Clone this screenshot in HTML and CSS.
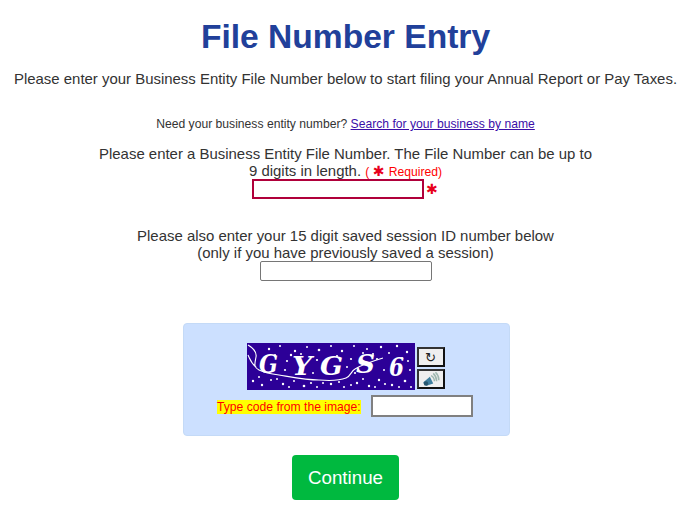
FILE: index.html
```html
<!DOCTYPE html>
<html lang="en">
<head>
    <meta charset="UTF-8">
    <meta name="viewport" content="width=device-width, initial-scale=1.0">
    <title>File Number Entry</title>
    <link rel="stylesheet" href="styles.css">
</head>
<body>
    <div class="page">
        <h1>File Number Entry</h1>
        <p class="intro">Please enter your Business Entity File Number below to start filing your Annual Report or Pay Taxes.</p>
        <p class="lookup">Need your business entity number? <a href="#">Search for your business by name</a></p>

        <div class="field file-field">
            <label for="fileNumber">Please enter a Business Entity File Number. The File Number can be up to<br>9 digits in length. <span class="required">( <span class="star inline-star">✱</span> Required)</span></label>
            <div class="input-row">
                <input type="text" id="fileNumber" class="text-input invalid">
                <span class="star side-star">✱</span>
            </div>
        </div>

        <div class="field session-field">
            <label for="sessionId">Please also enter your 15 digit saved session ID number below<br>(only if you have previously saved a session)</label>
            <div class="input-row">
                <input type="text" id="sessionId" class="text-input">
            </div>
        </div>

        <div class="captcha">
            <div class="captcha-top">
                <svg class="captcha-img" width="168" height="47" viewBox="0 0 168 47">
                    <rect width="168" height="47" fill="#2c0097"/>
                    <g fill="#fff">
                        <circle cx="22" cy="6" r="1.2"/><circle cx="33" cy="3" r="1"/><circle cx="48" cy="8" r="1.2"/>
                        <circle cx="60" cy="4" r="1"/><circle cx="72" cy="7" r="1.3"/><circle cx="84" cy="3" r="1"/>
                        <circle cx="95" cy="8" r="1.2"/><circle cx="107" cy="3" r="1"/><circle cx="120" cy="6" r="1"/>
                        <circle cx="134" cy="4" r="1.2"/><circle cx="150" cy="3" r="1.2"/><circle cx="160" cy="9" r="1.2"/>
                        <circle cx="6" cy="38" r="1.2"/><circle cx="15" cy="42" r="1.2"/><circle cx="24" cy="37" r="1"/>
                        <circle cx="36" cy="41" r="1.2"/><circle cx="47" cy="38" r="1"/><circle cx="57" cy="43" r="1.3"/>
                        <circle cx="70" cy="44" r="1"/><circle cx="84" cy="41" r="1.2"/><circle cx="97" cy="44" r="1"/>
                        <circle cx="110" cy="40" r="1.2"/><circle cx="122" cy="43" r="1.2"/><circle cx="132" cy="37" r="1.2"/>
                        <circle cx="145" cy="42" r="1.2"/><circle cx="158" cy="38" r="1.3"/><circle cx="163" cy="27" r="1"/>
                        <circle cx="40" cy="18" r="1.1"/><circle cx="38" cy="27" r="1.1"/><circle cx="70" cy="17" r="1.1"/>
                        <circle cx="104" cy="16" r="1.1"/><circle cx="108" cy="30" r="1.1"/><circle cx="130" cy="16" r="1.1"/>
                        <circle cx="44" cy="12" r="1.2"/><circle cx="54" cy="11" r="1"/><circle cx="66" cy="30" r="1"/>
                        <circle cx="28" cy="12" r="1"/><circle cx="90" cy="13" r="1.1"/><circle cx="100" cy="24" r="1"/>
                        <circle cx="116" cy="10" r="1"/><circle cx="126" cy="11" r="1.1"/><circle cx="137" cy="27" r="1"/>
                        <circle cx="142" cy="10" r="1"/><circle cx="155" cy="15" r="1.1"/><circle cx="161" cy="18" r="1"/>
                        <circle cx="12" cy="34" r="1"/><circle cx="30" cy="36" r="1"/><circle cx="42" cy="44" r="1"/>
                        <circle cx="64" cy="40" r="1.1"/><circle cx="76" cy="40" r="1"/><circle cx="92" cy="39" r="1"/>
                        <circle cx="104" cy="42" r="1"/><circle cx="116" cy="36" r="1"/><circle cx="138" cy="41" r="1.1"/>
                        <circle cx="152" cy="44" r="1"/><circle cx="164" cy="44" r="1"/><circle cx="128" cy="44" r="1"/>
                    </g>
                    <text class="captcha-text" x="12" y="30" textLength="19" lengthAdjust="spacingAndGlyphs">G</text>
                    <text class="captcha-text" x="45" y="32" textLength="20" lengthAdjust="spacingAndGlyphs">Y</text>
                    <text class="captcha-text" x="73" y="32" textLength="23" lengthAdjust="spacingAndGlyphs">G</text>
                    <text class="captcha-text" x="109" y="30" textLength="19" lengthAdjust="spacingAndGlyphs">S</text>
                    <text class="captcha-text" x="142" y="33" textLength="15" lengthAdjust="spacingAndGlyphs">6</text>
                    <path d="M1 2 C6 5 10 9 9 14 C8 20 6 24 12 27 C18 30 24 31 32 32 C50 35 60 37 72 37 C84 38 94 37 99 35 C104 33 104 28 108 26 C116 21 126 18 136 15 M1 12 C3 16 4 20 9 24" fill="none" stroke="#fff" stroke-width="1.1"/>
                </svg>
                <div class="captcha-btns">
                    <button type="button" class="icon-btn">↻</button>
                    <button type="button" class="icon-btn">
                        <svg width="18" height="16" viewBox="0 0 16 14">
                            <path d="M1 10 L7 5 L10 11 L4 13 Z" fill="#3f7f9f"/>
                            <circle cx="3.5" cy="11" r="2" fill="#27566e"/>
                            <path d="M8 4 C10 5 11 7 11 9 M10 2 C12 4 13 6 13 9 M12 1 C14 3 15 6 15 8" fill="none" stroke="#9fb8b0" stroke-width="1.3"/>
                        </svg>
                    </button>
                </div>
            </div>
            <div class="captcha-entry">
                <label for="captchaCode" class="captcha-label">Type code from the image:</label>
                <input type="text" id="captchaCode" class="captcha-input">
            </div>
        </div>

        <button type="button" class="continue">Continue</button>
    </div>
</body>
</html>
```

FILE: styles.css
```css
body {
    margin: 0;
    font-family: "Liberation Sans", Arial, sans-serif;
    color: #333;
    background: #fff;
}

.page {
    width: 691px;
    text-align: center;
}

h1 {
    margin: 0;
    padding-top: 16px;
    font-size: 33.6px;
    line-height: 42px;
    font-weight: bold;
    color: #21409a;
}

.intro {
    margin: 12px 0 0;
    font-size: 14.95px;
    line-height: 18px;
}

.lookup {
    margin: 29px 0 0;
    font-size: 12.15px;
    line-height: 15px;
}

.lookup a {
    color: #3b0ea8;
}

.field {
    font-size: 14.95px;
    line-height: 17px;
}

.field label {
    display: block;
}

.file-field {
    margin-top: 13px;
}

.session-field {
    margin-top: 28px;
}

.required {
    font-size: 12.15px;
    line-height: 1;
    color: #f00;
}

.star {
    color: #e8001c;
    font-family: "DejaVu Sans", sans-serif;
    font-size: 14px;
    line-height: 1;
    font-weight: bold;
}

.inline-star {
    margin-right: 1px;
}

.input-row {
    display: flex;
    justify-content: center;
    align-items: flex-start;
    gap: 2px;
}

.side-star {
    width: 13px;
    padding-top: 3px;
    text-align: left;
}

.text-input {
    display: block;
    box-sizing: border-box;
    width: 172px;
    height: 20px;
    margin: 0;
    padding: 1px 2px;
    border: 1px solid #767676;
    border-radius: 2px;
    background: #fff;
}

.invalid {
    border: 2px solid #b0003a;
    border-radius: 0;
}

.captcha {
    box-sizing: border-box;
    width: 327px;
    height: 113px;
    margin: 42px 0 0 183px;
    padding-top: 19px;
    background: #cce0ff;
    border: 1px solid #c4daf7;
    border-radius: 4px;
}

.captcha-top {
    display: flex;
    justify-content: center;
    align-items: flex-start;
    gap: 2px;
    padding-right: 2px;
}

.captcha-img {
    display: block;
}

.captcha-text {
    font-family: "DejaVu Serif", serif;
    font-style: italic;
    font-weight: bold;
    font-size: 26px;
    fill: #fff;
}

.captcha-btns {
    display: flex;
    flex-direction: column;
    gap: 2px;
    padding-top: 4px;
}

.icon-btn {
    display: flex;
    align-items: center;
    justify-content: center;
    box-sizing: border-box;
    width: 28px;
    height: 20px;
    padding: 0;
    font-size: 13px;
    font-family: "DejaVu Sans", sans-serif;
    color: #222;
    background: #efefef;
    border: 2px solid #111;
    border-top-color: #333;
    border-left-color: #333;
}

.captcha-entry {
    display: flex;
    align-items: center;
    gap: 10px;
    margin-top: 5px;
    padding-left: 33px;
}

.captcha-label {
    margin-top: 2px;
    font-size: 12.15px;
    line-height: 14px;
    color: #f00;
    background: #ff0;
}

.captcha-input {
    box-sizing: border-box;
    width: 102px;
    height: 22px;
    margin: 0;
    border: 2px solid #808080;
    background: #fff;
}

.continue {
    display: block;
    width: 107px;
    height: 45px;
    margin: 19px auto 0;
    padding: 0;
    font-family: inherit;
    font-size: 18.75px;
    color: #fff;
    background: #00b93f;
    border: none;
    border-radius: 4px;
}
```
